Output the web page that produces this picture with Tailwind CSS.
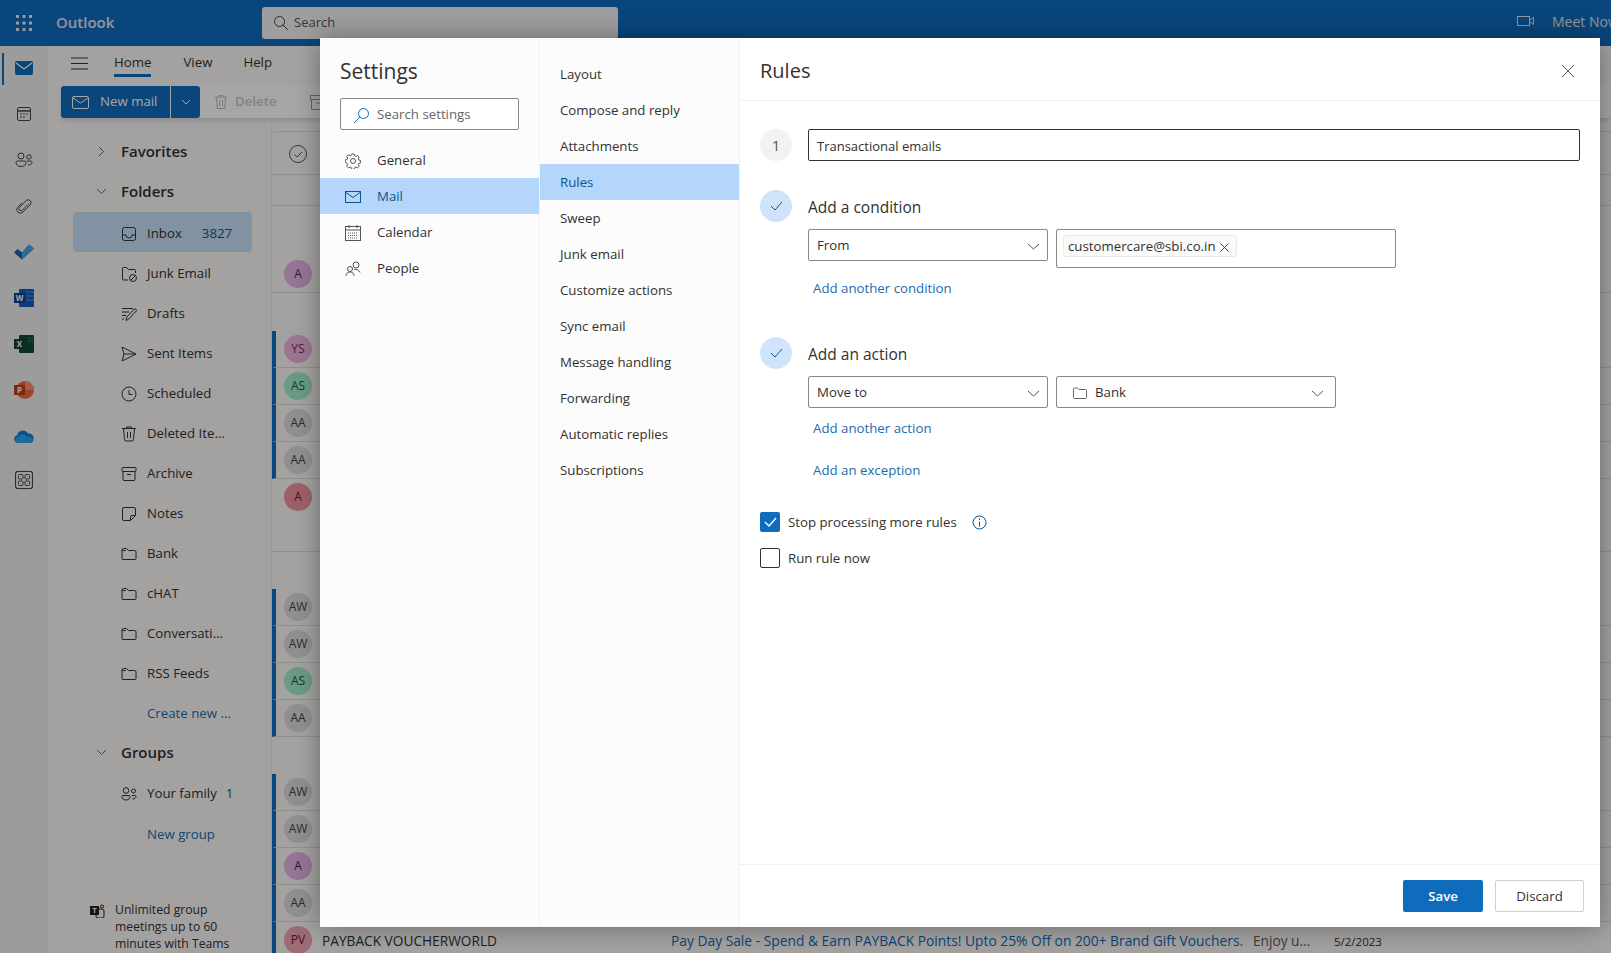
<!DOCTYPE html>
<html lang="en">
<head>
  <meta charset="UTF-8" />
  <title>Outlook - Rules</title>
  <script src="https://cdn.jsdelivr.net/npm/@tailwindcss/browser@4"></script>
</head>
<body class="font-['Open_Sans',sans-serif]">
<div class="relative w-[1611px] h-[953px] overflow-hidden bg-[#faf9f8] text-[13.25px] text-[#323130]">

  <!-- top bar -->
  <header class="h-[46px] bg-[#0f6cbd] flex items-center text-white">
    <div class="w-[48px] flex justify-center">
      <svg width="16" height="16" viewBox="0 0 16 16" fill="#e8eef5"><rect x="0" y="0" width="3" height="3"/><rect x="6.5" y="0" width="3" height="3"/><rect x="13" y="0" width="3" height="3"/><rect x="0" y="6.5" width="3" height="3"/><rect x="6.5" y="6.5" width="3" height="3"/><rect x="13" y="6.5" width="3" height="3"/><rect x="0" y="13" width="3" height="3"/><rect x="6.5" y="13" width="3" height="3"/><rect x="13" y="13" width="3" height="3"/></svg>
    </div>
    <span class="ml-[8px] w-[206px] -mt-[1px] text-[15px] font-semibold text-[#e6e0f5]">Outlook</span>
    <div class="w-[356px] h-[32px] -mt-[1px] bg-[#f3f3f3] rounded-[3px] flex items-center pl-[11px] gap-[5px] text-[#555] text-[13px]">
      <svg width="16" height="16" viewBox="0 0 16 16" fill="none" stroke="#444" stroke-width="1"><circle cx="6.5" cy="6.5" r="5"/><path d="M10 10l5 5"/></svg>
      Search
    </div>
    <div class="ml-auto -mt-[4px] flex items-center gap-[18px] text-[14px] text-[#dfe6ee]">
      <svg width="17" height="12" viewBox="0 0 17 12" fill="none" stroke="#e8e8e8" stroke-width="1"><rect x="0.5" y="1.5" width="12" height="9"/><path d="M13 5l3.5-2.5v7L13 7"/></svg>
      <span class="w-[59px] overflow-hidden whitespace-nowrap">Meet Now</span>
    </div>
  </header>

  <div class="flex h-[907px]">
    <!-- app rail -->
    <nav class="w-[48px] bg-[#f0f0f0] flex flex-col items-center relative">
      <span class="absolute left-[2px] top-[7px] w-[2px] h-[32px] bg-[#0f6cbd]"></span>
      <div class="h-[46px] flex items-center -mt-[1px]">
        <svg width="18" height="14" viewBox="0 0 18 14"><rect width="18" height="14" rx="2" fill="#0f6cbd"/><path d="M1 2l8 6 8-6" fill="none" stroke="#fff" stroke-width="1.2"/></svg>
      </div>
      <div class="h-[46px] flex items-center">
        <svg width="16" height="16" viewBox="0 0 16 16" fill="none" stroke="#444"><rect x="1.5" y="1.5" width="13" height="13" rx="1.5"/><path d="M1.5 5h13" stroke-width="1.5"/><path d="M4 8h2M7 8h2M10 8h2M4 11h2M7 11h2" /></svg>
      </div>
      <div class="h-[46px] flex items-center">
        <svg width="18" height="16" viewBox="0 0 18 16" fill="none" stroke="#444"><circle cx="6" cy="4" r="3"/><circle cx="14" cy="5" r="2.2"/><path d="M1 10.5a1.5 1.5 0 0 1 1.5-1.5h7a1.5 1.5 0 0 1 1.5 1.5c0 2.5-2 4-5 4s-5-1.500-5-4z"/><path d="M12 9h3.500a1.500 1.500 0 0 1 1.500 1.500c0 1.500-1.500 2.500-4 2.500"/></svg>
      </div>
      <div class="h-[46px] flex items-center">
        <svg width="16" height="16" viewBox="0 0 16 16" fill="none" stroke="#444"><path d="M13 5.500L6.500 12a2 2 0 0 1-3-2.800l6.800-6.800a3 3 0 0 1 4.200 4.200L7 14a3.500 3.500 0 0 1-5.300-4.800L6 5"/></svg>
      </div>
      <div class="h-[46px] flex items-center">
        <svg width="20" height="16" viewBox="0 0 20 16"><path d="M0 8.500L3.500 5l4.500 3.500L15 .5l5 4L8 15.500z" fill="#1a5fb4"/><path d="M8 8.500L15 .5l5 4L8 15.500z" fill="#4ba3e8"/></svg>
      </div>
      <div class="h-[46px] flex items-center">
        <svg width="20" height="18" viewBox="0 0 20 18"><rect x="5" y="0" width="15" height="18" rx="1" fill="#185abd"/><path d="M12 3h8M12 7h8M12 11h8" stroke="#41a5ee" stroke-width="1"/><rect x="0" y="4" width="11" height="10" fill="#103f91"/><text x="5.500" y="12" font-size="8" font-weight="700" fill="#fff" text-anchor="middle">W</text></svg>
      </div>
      <div class="h-[46px] flex items-center">
        <svg width="20" height="18" viewBox="0 0 20 18"><rect x="5" y="0" width="15" height="18" rx="1" fill="#0e4a33"/><path d="M14 3h5M14 6h5" stroke="#3f8fbf" stroke-dasharray="1 1"/><rect x="0" y="4" width="11" height="10" fill="#123f2c"/><text x="5.500" y="12" font-size="8" font-weight="700" fill="#fff" text-anchor="middle">X</text></svg>
      </div>
      <div class="h-[46px] flex items-center">
        <svg width="20" height="18" viewBox="0 0 20 18"><circle cx="11" cy="9" r="9" fill="#ed6c47"/><path d="M11 0a9 9 0 0 1 9 9h-9z" fill="#ff8f6b"/><rect x="0" y="4" width="11" height="10" fill="#c43e1c"/><text x="5.500" y="12" font-size="8" font-weight="700" fill="#fff" text-anchor="middle">P</text></svg>
      </div>
      <div class="h-[46px] flex items-center">
        <svg width="20" height="13" viewBox="0 0 20 13"><path d="M4 13a4 4 0 0 1-1-7.800A6 6 0 0 1 14 3.500a4.800 4.800 0 0 1 5.500 5.500A4 4 0 0 1 16 13z" fill="#0f78d4"/><path d="M4 13a3 3 0 0 1 0-6 5 5 0 0 1 9 0 4 4 0 0 1 6 3 3 3 0 0 1-3 3z" fill="#28a8ea"/></svg>
      </div>
      <div class="h-[46px] flex items-center -mt-[2px]">
        <svg width="18" height="18" viewBox="0 0 18 18" fill="none" stroke="#444"><rect x="0.500" y="0.500" width="17" height="17" rx="2.500" stroke-width="1.200"/><rect x="3.500" y="3.500" width="4.500" height="4.500" rx="1"/><rect x="10" y="3.500" width="4.500" height="4.500" rx="1"/><rect x="3.500" y="10" width="4.500" height="4.500" rx="1"/><rect x="10" y="10" width="4.500" height="4.500" rx="1"/></svg>
      </div>
    </nav>

    <!-- mail module -->
    <main class="flex-1 flex flex-col min-w-0">
      <div class="h-[34px] flex items-center">
        <svg class="ml-[23px]" width="17" height="13" viewBox="0 0 17 13" stroke="#333"><path d="M0 1h17M0 6.500h17M0 12h17"/></svg>
        <div class="ml-[26px] h-[34px] flex items-center relative font-medium">Home<span class="absolute left-0 right-0 bottom-[3px] h-[3px] bg-[#0f6cbd]"></span></div>
        <span class="ml-[32px]">View</span>
        <span class="ml-[31px]">Help</span>
      </div>
      <div class="ml-[13px] mt-[6px] h-[32px] flex items-center bg-white rounded-[3px] shadow-md">
        <div class="h-[32px] w-[110px] rounded-l-[3px] bg-[#0f6cbd] text-white flex items-center pl-[11px] gap-[11px] border-r border-white">
          <svg width="17" height="13" viewBox="0 0 17 13" fill="none" stroke="#fff"><rect x="0.500" y="0.500" width="16" height="12" rx="1.500"/><path d="M1 2l7.500 5L16 2"/></svg>
          New mail
        </div>
        <div class="h-[32px] w-[29px] rounded-r-[3px] bg-[#0f6cbd] flex items-center justify-center">
          <svg width="10" height="6" viewBox="0 0 10 6" fill="none" stroke="#fff"><path d="M1 1l4 4 4-4"/></svg>
        </div>
        <svg class="ml-[14px]" width="14" height="16" viewBox="0 0 14 16" fill="none" stroke="#bdbdbd"><path d="M1 3h12M5 3V1.500h4V3M2.500 3l.8 11.500h7.400L11.500 3M5.500 6v6M8.500 6v6"/></svg>
        <span class="ml-[7px] text-[#c8c8c8] font-semibold">Delete</span>
        <svg class="ml-[33px]" width="16" height="15" viewBox="0 0 16 15" fill="none" stroke="#999"><rect x="0.500" y="0.500" width="15" height="4"/><path d="M1.500 4.500v10h13v-10M6 8h4"/></svg>
      </div>

      <div class="flex flex-1 mt-[7px] min-h-0">
        <!-- folder pane -->
        <aside class="w-[223px] shrink-0 pt-[6px]">
          <div class="h-[40px] flex items-center font-semibold text-[15px]">
            <svg class="ml-[50px]" width="7" height="11" viewBox="0 0 7 11" fill="none" stroke="#666"><path d="M1 1l4.500 4.500L1 10"/></svg>
            <span class="ml-[16px]">Favorites</span>
          </div>
          <div class="h-[40px] flex items-center font-semibold text-[15px]">
            <svg class="ml-[48px]" width="11" height="7" viewBox="0 0 11 7" fill="none" stroke="#666"><path d="M1 1l4.500 4.500L10 1"/></svg>
            <span class="ml-[14px]">Folders</span>
          </div>
          <div class="ml-[25px] mt-[1px] w-[179px] h-[40px] pt-[3px] rounded-[4px] bg-[#c7e0f9] flex items-center pl-[48px]">
            <svg class="mr-[10px]" width="16" height="16" viewBox="0 0 16 16" fill="none" stroke="#333"><rect x="1.500" y="1.500" width="13" height="13" rx="2"/><path d="M1.500 9h3.500a3 3 0 0 0 6 0h3.500"/></svg>
            <span class="font-medium">Inbox</span><span class="ml-[20px] text-[#0f548c]">3827</span>
          </div>
          <div class="h-[40px] pt-[3px] flex items-center pl-[73px] gap-[10px]">
            <svg width="16" height="16" viewBox="0 0 16 16" fill="none" stroke="#333"><path d="M7 14H2.500a1 1 0 0 1-1-1V2.500a1 1 0 0 1 1-1h3l2 2h6a1 1 0 0 1 1 1V7"/><circle cx="12" cy="12" r="3.500"/><path d="M9.500 14.500l5-5"/></svg>
            Junk Email
          </div>
          <div class="h-[40px] pt-[3px] flex items-center pl-[73px] gap-[10px]">
            <svg width="16" height="16" viewBox="0 0 16 16" fill="none" stroke="#333"><path d="M1 2.500h11M1 6h7M1 9.500h4M1 13h2M5 14.500l.8-3.500 7.500-8a1.500 1.500 0 0 1 2 2l-7.500 8z"/></svg>
            Drafts
          </div>
          <div class="h-[40px] pt-[3px] flex items-center pl-[73px] gap-[10px]">
            <svg width="16" height="16" viewBox="0 0 16 16" fill="none" stroke="#333"><path d="M1 1l14 7-14 7 2-7zM3 8h12"/></svg>
            Sent Items
          </div>
          <div class="h-[40px] pt-[3px] flex items-center pl-[73px] gap-[10px]">
            <svg width="16" height="16" viewBox="0 0 16 16" fill="none" stroke="#333"><circle cx="8" cy="8" r="7"/><path d="M8 4v4.500h3.500"/></svg>
            Scheduled
          </div>
          <div class="h-[40px] pt-[3px] flex items-center pl-[73px] gap-[10px]">
            <svg width="16" height="16" viewBox="0 0 16 16" fill="none" stroke="#333"><path d="M1 2.500h14M5.500 2.500V1h5v1.500M2.500 2.500l1 11a1.500 1.500 0 0 0 1.500 1.500h6a1.500 1.500 0 0 0 1.500-1.500l1-11M6.500 6v6M9.500 6v6"/></svg>
            Deleted Ite...
          </div>
          <div class="h-[40px] pt-[3px] flex items-center pl-[73px] gap-[10px]">
            <svg width="16" height="16" viewBox="0 0 16 16" fill="none" stroke="#333"><rect x="1" y="1.500" width="14" height="4" rx="1"/><path d="M2 5.500v8a1 1 0 0 0 1 1h10a1 1 0 0 0 1-1v-8M6 8.500h4"/></svg>
            Archive
          </div>
          <div class="h-[40px] pt-[3px] flex items-center pl-[73px] gap-[10px]">
            <svg width="16" height="16" viewBox="0 0 16 16" fill="none" stroke="#333"><path d="M3 1.500h10a1.500 1.500 0 0 1 1.500 1.500v6.500l-5 5H3a1.500 1.500 0 0 1-1.500-1.500V3A1.500 1.500 0 0 1 3 1.500zM14.500 9.500h-3.500a1.500 1.500 0 0 0-1.500 1.500v3.500"/></svg>
            Notes
          </div>
          <div class="h-[40px] pt-[3px] flex items-center pl-[73px] gap-[10px]">
            <svg width="16" height="16" viewBox="0 0 16 16" fill="none" stroke="#333"><path d="M1 4a1.500 1.500 0 0 1 1.500-1.500h3l2 2h6A1.500 1.500 0 0 1 15 6v6.500a1 1 0 0 1-1 1H2a1 1 0 0 1-1-1z"/><path d="M1 4.500h4"/></svg>
            Bank
          </div>
          <div class="h-[40px] pt-[3px] flex items-center pl-[73px] gap-[10px]">
            <svg width="16" height="16" viewBox="0 0 16 16" fill="none" stroke="#333"><path d="M1 4a1.500 1.500 0 0 1 1.500-1.500h3l2 2h6A1.500 1.500 0 0 1 15 6v6.500a1 1 0 0 1-1 1H2a1 1 0 0 1-1-1z"/><path d="M1 4.500h4"/></svg>
            cHAT
          </div>
          <div class="h-[40px] pt-[3px] flex items-center pl-[73px] gap-[10px]">
            <svg width="16" height="16" viewBox="0 0 16 16" fill="none" stroke="#333"><path d="M1 4a1.500 1.500 0 0 1 1.500-1.500h3l2 2h6A1.500 1.500 0 0 1 15 6v6.500a1 1 0 0 1-1 1H2a1 1 0 0 1-1-1z"/><path d="M1 4.500h4"/></svg>
            Conversati...
          </div>
          <div class="h-[40px] pt-[3px] flex items-center pl-[73px] gap-[10px]">
            <svg width="16" height="16" viewBox="0 0 16 16" fill="none" stroke="#333"><path d="M1 4a1.500 1.500 0 0 1 1.500-1.500h3l2 2h6A1.500 1.500 0 0 1 15 6v6.500a1 1 0 0 1-1 1H2a1 1 0 0 1-1-1z"/><path d="M1 4.500h4"/></svg>
            RSS Feeds
          </div>
          <div class="h-[40px] pt-[3px] flex items-center pl-[99px] text-[#1a6bb0]">Create new ...</div>
          <div class="h-[40px] flex items-center font-semibold text-[15px]">
            <svg class="ml-[48px]" width="11" height="7" viewBox="0 0 11 7" fill="none" stroke="#666"><path d="M1 1l4.500 4.500L10 1"/></svg>
            <span class="ml-[14px]">Groups</span>
          </div>
          <div class="h-[41px] pt-[3px] flex items-center pl-[73px] gap-[10px]">
            <svg width="16" height="14" viewBox="0 0 16 14" fill="none" stroke="#333"><circle cx="5" cy="3.500" r="2.800"/><circle cx="12.500" cy="4" r="2"/><path d="M1 9.500a1 1 0 0 1 1-1h6a1 1 0 0 1 1 1c0 2-1.500 3.500-4 3.500S1 11.500 1 9.500zM11 8.500h3a1 1 0 0 1 1 1c0 1.500-1.200 2.500-3.500 2.500"/></svg>
            Your family<span class="-ml-[1px] text-[#0f548c]">1</span>
          </div>
          <div class="h-[40px] pt-[3px] flex items-center pl-[99px] text-[#1a6bb0]">New group</div>
          <div class="mt-[48px] pl-[42px] flex gap-[10px] text-[12.2px] leading-[17px]">
            <svg class="mt-[3px] shrink-0" width="15" height="14" viewBox="0 0 15 14"><rect x="0" y="2" width="9" height="9" fill="#222"/><rect x="6" y="5" width="8" height="9" rx="2" fill="none" stroke="#222"/><circle cx="12" cy="2.500" r="1.500" fill="none" stroke="#222"/><text x="4.500" y="9" font-size="7" font-weight="700" fill="#fff" text-anchor="middle">T</text></svg>
            <p class="w-[125px]">Unlimited group meetings up to 60 minutes with Teams</p>
          </div>
        </aside>

        <!-- message list -->
        <section class="flex-1 min-w-0 border-l border-[#e6e6e6] pt-[6px]">
          <div class="h-[44px] border-b border-t border-[#dcdcdc] flex items-center pl-[16px] pt-[2px] rounded-tl-[4px]">
            <svg width="20" height="20" viewBox="0 0 20 20" fill="none" stroke="#555"><circle cx="10" cy="10" r="8.500"/><path d="M6.500 10.500l2.500 2.500 5-5"/></svg>
          </div>
          <div class="h-[31px] border-b border-[#dcdcdc]"></div>
          <div class="h-[87px] border-b border-[#dcdcdc] pt-[54px] pl-[12px]">
            <span class="w-[28px] h-[28px] rounded-full bg-[#e5b5e5] text-[#5a1a6a] text-[12px] flex items-center justify-center">A</span>
          </div>
          <div class="h-[38px]"></div>
          <div class="h-[37px] border-b border-[#dcdcdc] border-l-[4px] border-l-[#0f6cbd] pt-[4px] pl-[8px]"><span class="w-[28px] h-[28px] rounded-full bg-[#eeb5e0] text-[#6e3060] text-[12px] flex items-center justify-center">YS</span></div>
          <div class="h-[37px] border-b border-[#dcdcdc] border-l-[4px] border-l-[#0f6cbd] pt-[4px] pl-[8px]"><span class="w-[28px] h-[28px] rounded-full bg-[#a5efcc] text-[#185c37] text-[12px] flex items-center justify-center">AS</span></div>
          <div class="h-[37px] border-b border-[#dcdcdc] border-l-[4px] border-l-[#0f6cbd] pt-[4px] pl-[8px]"><span class="w-[28px] h-[28px] rounded-full bg-[#dddddd] text-[#444] text-[12px] flex items-center justify-center">AA</span></div>
          <div class="h-[37px] border-b border-[#dcdcdc] border-l-[4px] border-l-[#0f6cbd] pt-[4px] pl-[8px]"><span class="w-[28px] h-[28px] rounded-full bg-[#dddddd] text-[#444] text-[12px] flex items-center justify-center">AA</span></div>
          <div class="h-[73px] border-b border-[#dcdcdc] pt-[4px] pl-[12px]"><span class="w-[28px] h-[28px] rounded-full bg-[#f095a0] text-[#7a1030] text-[12px] flex items-center justify-center">A</span></div>
          <div class="h-[37px]"></div>
          <div class="h-[37px] border-b border-[#dcdcdc] border-l-[4px] border-l-[#0f6cbd] pt-[4px] pl-[8px]"><span class="w-[28px] h-[28px] rounded-full bg-[#dddddd] text-[#444] text-[12px] flex items-center justify-center">AW</span></div>
          <div class="h-[37px] border-b border-[#dcdcdc] border-l-[4px] border-l-[#0f6cbd] pt-[4px] pl-[8px]"><span class="w-[28px] h-[28px] rounded-full bg-[#dddddd] text-[#444] text-[12px] flex items-center justify-center">AW</span></div>
          <div class="h-[37px] border-b border-[#dcdcdc] border-l-[4px] border-l-[#0f6cbd] pt-[4px] pl-[8px]"><span class="w-[28px] h-[28px] rounded-full bg-[#a5efcc] text-[#185c37] text-[12px] flex items-center justify-center">AS</span></div>
          <div class="h-[37px] border-b border-[#dcdcdc] border-l-[4px] border-l-[#0f6cbd] pt-[4px] pl-[8px]"><span class="w-[28px] h-[28px] rounded-full bg-[#dddddd] text-[#444] text-[12px] flex items-center justify-center">AA</span></div>
          <div class="h-[37px]"></div>
          <div class="h-[37px] border-b border-[#dcdcdc] border-l-[4px] border-l-[#0f6cbd] pt-[4px] pl-[8px]"><span class="w-[28px] h-[28px] rounded-full bg-[#dddddd] text-[#444] text-[12px] flex items-center justify-center">AW</span></div>
          <div class="h-[37px] border-b border-[#dcdcdc] border-l-[4px] border-l-[#0f6cbd] pt-[4px] pl-[8px]"><span class="w-[28px] h-[28px] rounded-full bg-[#dddddd] text-[#444] text-[12px] flex items-center justify-center">AW</span></div>
          <div class="h-[37px] border-b border-[#dcdcdc] border-l-[4px] border-l-[#0f6cbd] pt-[4px] pl-[8px]"><span class="w-[28px] h-[28px] rounded-full bg-[#e5b5e5] text-[#4a1060] text-[12px] flex items-center justify-center">A</span></div>
          <div class="h-[37px] border-b border-[#dcdcdc] border-l-[4px] border-l-[#0f6cbd] pt-[4px] pl-[8px]"><span class="w-[28px] h-[28px] rounded-full bg-[#dddddd] text-[#444] text-[12px] flex items-center justify-center">AA</span></div>
          <div class="h-[37px] border-l-[4px] border-l-[#0f6cbd] pt-[4px] pl-[8px] flex items-start whitespace-nowrap">
            <span class="w-[28px] h-[28px] shrink-0 rounded-full bg-[#f0a5b5] text-[#7a1030] text-[12px] flex items-center justify-center">PV</span>
            <span class="ml-[10px] w-[349px] pt-[5px] text-[13.7px] leading-[20px] font-medium">PAYBACK VOUCHERWORLD</span>
            <span class="pt-[5px] w-[582px] text-[#0f6cbd] font-medium text-[13.8px] leading-[20px]">Pay Day Sale - Spend &amp; Earn PAYBACK Points! Upto 25% Off on 200+ Brand Gift Vouchers.</span>
            <span class="pt-[5px] w-[81px] text-[#605e5c] text-[13.7px] leading-[20px]">Enjoy u...</span>
            <span class="pt-[6px] text-[11.5px] leading-[20px]">5/2/2023</span>
          </div>
        </section>
      </div>
    </main>
  </div>

  <!-- dim layer -->
  <div class="absolute inset-0 bg-black/35"></div>

  <!-- settings dialog -->
  <div class="absolute left-[320px] top-[38px] w-[1280px] h-[889px] bg-white shadow-[0_0_24px_rgba(0,0,0,0.35)] flex">
    <div class="w-[220px] bg-[#fcfcfc] border-r border-[#f0f0f0] shrink-0">
      <h2 class="h-[60px] pl-[20px] pt-[15px] text-[21px] leading-[36px] font-medium">Settings</h2>
      <div class="ml-[20px] w-[179px] h-[32px] pt-[2px] bg-white border border-[#8a8886] rounded-[2px] flex items-center pl-[12px] gap-[7px] text-[#666]">
        <svg width="17" height="17" viewBox="0 0 17 17" fill="none" stroke="#0f6cbd"><circle cx="10.500" cy="6.500" r="5"/><path d="M7 10l-6 6"/></svg>
        Search settings
      </div>
      <div class="mt-[12px]">
        <div class="h-[36px] pt-[2px] flex items-center pl-[25px] gap-[16px]">
          <svg width="16" height="16" viewBox="0 0 16 16" fill="none" stroke="#555"><circle cx="8" cy="8" r="2.500"/><path d="M6.800 1h2.400l.4 1.800 1.300.6 1.600-.9 1.700 1.700-.9 1.600.6 1.300 1.800.4v2.400l-1.800.4-.6 1.300.9 1.600-1.700 1.700-1.600-.9-1.300.6-.4 1.800H6.800l-.4-1.800-1.300-.6-1.600.9-1.700-1.700.9-1.600-.6-1.300L.3 9.200V6.800l1.800-.4.6-1.300-.9-1.600 1.700-1.700 1.600.9 1.300-.6z"/></svg>
          General
        </div>
        <div class="h-[36px] pt-[2px] flex items-center pl-[25px] gap-[16px] bg-[#b3d6fa] text-[#0f548c] font-medium">
          <svg width="16" height="12" viewBox="0 0 16 12" fill="none" stroke="#0f548c"><rect x="0.500" y="0.500" width="15" height="11"/><path d="M1 1.500l7 5 7-5"/></svg>
          Mail
        </div>
        <div class="h-[36px] pt-[2px] flex items-center pl-[25px] gap-[16px]">
          <svg width="16" height="16" viewBox="0 0 16 16" fill="none" stroke="#555"><rect x="0.500" y="1.500" width="15" height="14"/><path d="M0.500 5h15M4 0v3M12 0v3"/><path d="M3 8h10M3 10.500h10M3 13h10" stroke-dasharray="1 1"/></svg>
          Calendar
        </div>
        <div class="h-[36px] pt-[2px] flex items-center pl-[25px] gap-[16px]">
          <svg width="16" height="16" viewBox="0 0 16 16" fill="none" stroke="#555"><circle cx="11" cy="4" r="3"/><circle cx="5" cy="8" r="2.500"/><path d="M1 15c0-2.500 1.500-4 4-4s4 1.500 4 4M9 8.500c2.500-.5 5 .5 6 3"/></svg>
          People
        </div>
      </div>
    </div>

    <div class="w-[200px] shrink-0 bg-[#fcfcfc] border-r border-[#f0f0f0] pt-[18px]">
      <div class="h-[36px] pt-[2px] flex items-center pl-[20px]">Layout</div>
      <div class="h-[36px] pt-[2px] flex items-center pl-[20px]">Compose and reply</div>
      <div class="h-[36px] pt-[2px] flex items-center pl-[20px]">Attachments</div>
      <div class="h-[36px] pt-[2px] flex items-center pl-[20px] bg-[#b3d6fa] text-[#0f548c] font-medium">Rules</div>
      <div class="h-[36px] pt-[2px] flex items-center pl-[20px]">Sweep</div>
      <div class="h-[36px] pt-[2px] flex items-center pl-[20px]">Junk email</div>
      <div class="h-[36px] pt-[2px] flex items-center pl-[20px]">Customize actions</div>
      <div class="h-[36px] pt-[2px] flex items-center pl-[20px]">Sync email</div>
      <div class="h-[36px] pt-[2px] flex items-center pl-[20px]">Message handling</div>
      <div class="h-[36px] pt-[2px] flex items-center pl-[20px]">Forwarding</div>
      <div class="h-[36px] pt-[2px] flex items-center pl-[20px]">Automatic replies</div>
      <div class="h-[36px] pt-[2px] flex items-center pl-[20px]">Subscriptions</div>
    </div>

    <div class="flex-1 flex flex-col min-w-0">
      <div class="h-[63px] pt-[3px] border-b border-[#f0f0f0] flex items-center justify-between pl-[20px] pr-[25px]">
        <h2 class="text-[20px] font-medium">Rules</h2>
        <svg width="14" height="14" viewBox="0 0 14 14" stroke="#555"><path d="M1 1l12 12M13 1L1 13"/></svg>
      </div>
      <div class="flex-1 pl-[20px] pr-[20px] pt-[28px]">
        <div class="flex items-center gap-[16px]">
          <span class="w-[32px] h-[32px] rounded-full bg-[#f3f2f1] text-[#555] text-[15px] flex items-center justify-center">1</span>
          <div class="flex-1 h-[32px] pt-[3px] border border-[#323130] rounded-[2px] flex items-center pl-[8px] text-[13px]">Transactional emails</div>
        </div>

        <div class="mt-[29px] flex items-center gap-[16px]">
          <span class="w-[32px] h-[32px] rounded-full bg-[#cfe4fa] flex items-center justify-center">
            <svg width="13" height="10" viewBox="0 0 13 10" fill="none" stroke="#0f548c"><path d="M1 5l4 4 7-8"/></svg>
          </span>
          <span class="text-[15.5px] pt-[3px]">Add a condition</span>
        </div>
        <div class="ml-[48px] mt-[7px] flex items-start gap-[8px]">
          <div class="w-[240px] h-[32px] pt-[2px] border border-[#8a8886] rounded-[2px] flex items-center justify-between pl-[8px] pr-[7px]">From
            <svg width="13" height="7" viewBox="0 0 13 7" fill="none" stroke="#555"><path d="M1 1l5.500 5L12 1"/></svg>
          </div>
          <div class="w-[340px] h-[39px] border border-[#8a8886] rounded-[2px] pl-[6px] pt-[5px]">
            <div class="w-[174px] h-[22px] pt-[2px] bg-[#fafafa] border border-[#eaeaea] rounded-[3px] flex items-center justify-between pl-[4px] pr-[7px] whitespace-nowrap">customercare@sbi.co.in
              <svg width="9" height="9" viewBox="0 0 9 9" stroke="#444"><path d="M.5.5l8 8M8.500.5l-8 8"/></svg>
            </div>
          </div>
        </div>
        <div class="ml-[53px] mt-[10px] h-[20px] leading-[20px] text-[#1a6bb0]">Add another condition</div>

        <div class="mt-[39px] flex items-center gap-[16px]">
          <span class="w-[32px] h-[32px] rounded-full bg-[#cfe4fa] flex items-center justify-center">
            <svg width="13" height="10" viewBox="0 0 13 10" fill="none" stroke="#0f548c"><path d="M1 5l4 4 7-8"/></svg>
          </span>
          <span class="text-[15.5px] pt-[3px]">Add an action</span>
        </div>
        <div class="ml-[48px] mt-[7px] flex items-start gap-[8px]">
          <div class="w-[240px] h-[32px] pt-[2px] border border-[#8a8886] rounded-[2px] flex items-center justify-between pl-[8px] pr-[7px]">Move to
            <svg width="13" height="7" viewBox="0 0 13 7" fill="none" stroke="#555"><path d="M1 1l5.500 5L12 1"/></svg>
          </div>
          <div class="w-[280px] h-[32px] pt-[2px] border border-[#8a8886] rounded-[2px] flex items-center pl-[16px] pr-[11px]">
            <svg class="mr-[8px]" width="14" height="12" viewBox="0 0 14 12" fill="none" stroke="#666"><path d="M.5 2a1 1 0 0 1 1-1h3l1.500 1.500h6.500a1 1 0 0 1 1 1v7a1 1 0 0 1-1 1h-11a1 1 0 0 1-1-1z"/></svg>
            Bank
            <svg class="ml-auto" width="13" height="7" viewBox="0 0 13 7" fill="none" stroke="#555"><path d="M1 1l5.500 5L12 1"/></svg>
          </div>
        </div>
        <div class="ml-[53px] mt-[10px] h-[20px] leading-[20px] text-[#1a6bb0]">Add another action</div>
        <div class="ml-[53px] mt-[22px] h-[20px] leading-[20px] text-[#1a6bb0]">Add an exception</div>

        <div class="mt-[32px] flex items-center h-[20px]">
          <span class="w-[20px] h-[20px] rounded-[2px] bg-[#0f6cbd] flex items-center justify-center">
            <svg width="13" height="10" viewBox="0 0 13 10" fill="none" stroke="#fff" stroke-width="1.300"><path d="M1 5l4 4 7-8"/></svg>
          </span>
          <span class="ml-[8px] pt-[2px]">Stop processing more rules</span>
          <svg class="ml-[15px]" width="15" height="15" viewBox="0 0 15 15" fill="none" stroke="#0f548c"><circle cx="7.500" cy="7.500" r="6.500"/><path d="M7.500 6.500v5M7.500 3.500v1.500"/></svg>
        </div>
        <div class="mt-[16px] flex items-center h-[20px]">
          <span class="w-[20px] h-[20px] rounded-[2px] border border-[#323130]"></span>
          <span class="ml-[8px] pt-[2px]">Run rule now</span>
        </div>
      </div>
      <div class="h-[63px] border-t border-[#f0f0f0] flex justify-end items-start pt-[15px] pr-[16px] gap-[12px]">
        <div class="w-[80px] h-[32px] pt-[2px] rounded-[2px] bg-[#0f6cbd] text-white font-semibold flex items-center justify-center">Save</div>
        <div class="w-[89px] h-[32px] pt-[2px] rounded-[2px] border border-[#d1d1d1] font-medium flex items-center justify-center">Discard</div>
      </div>
    </div>
  </div>
</div>
</body>
</html>
